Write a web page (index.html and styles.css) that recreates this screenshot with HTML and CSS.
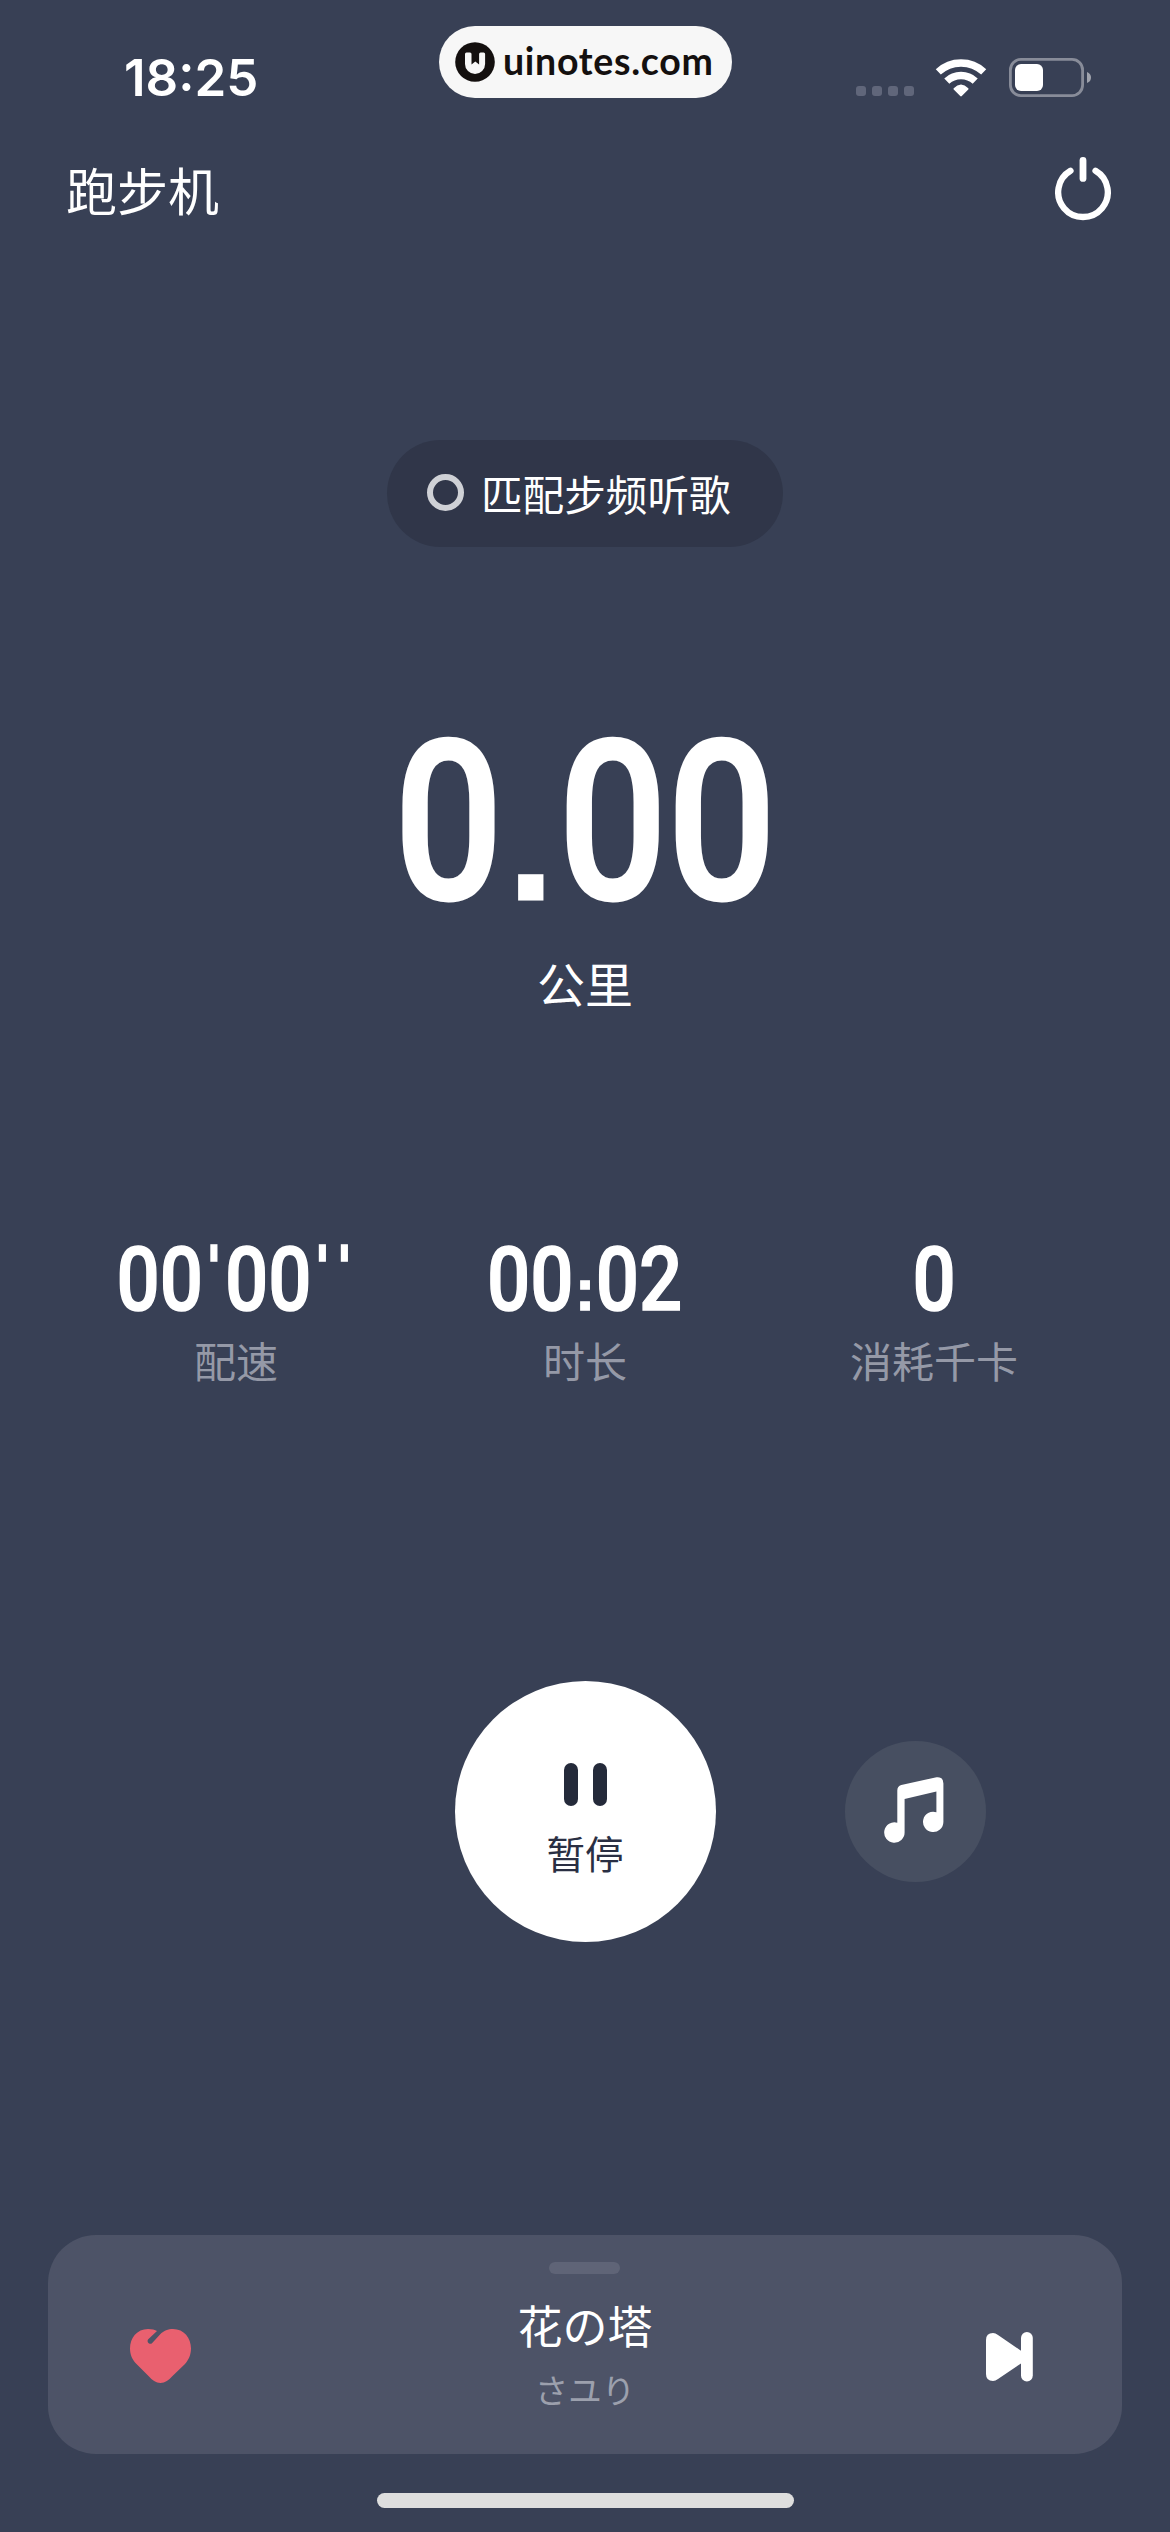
FILE: index.html
```html
<!DOCTYPE html>
<html lang="zh-CN">
<head>
<meta charset="utf-8">
<title>跑步机</title>
<link rel="stylesheet" href="styles.css">
</head>
<body>
<div class="screen">
  <header class="status">
    <span class="clock">18:25</span>
    <div class="island">
      <svg class="island-logo" viewBox="0 0 40 40"><circle cx="20" cy="20" r="19.8" fill="#14100f"/><path d="M10 12q0-1.500 1.500-1.500h3.500q1.500 0 1.500 1.500v10.500l3.800-3 3.800 3v-10.500q0-1.500 1.500-1.500h3q1.500 0 1.500 1.500v10a10 10 0 0 1-20.100 0z" fill="#f7f7f7"/></svg>
      <span class="island-text">uinotes.com</span>
    </div>
    <div class="indicators">
      <span class="signal"><i></i><i></i><i></i><i></i></span>
      <svg class="wifi" viewBox="0 0 52 38">
        <g fill="none" stroke="#fff" stroke-width="7.400"><path d="M3.300 12.900a33.300 33.300 0 0 1 45.400 0"/><path d="M11.800 22.100a20.800 20.800 0 0 1 28.400 0"/></g>
        <path d="M18.700 29.300q7.300-7.400 14.600 0q.5.700 0 1.300l-6.500 6.500q-.8.700-1.600 0l-6.500-6.500q-.5-.6 0-1.300z" fill="#fff"/>
      </svg>
      <svg class="battery" viewBox="0 0 82 39">
        <rect x="1.400" y="1.400" width="72.200" height="36.200" rx="10.500" fill="none" stroke="#888c99" stroke-width="2.800"/>
        <rect x="6" y="6" width="28" height="27" rx="6" fill="#fff"/>
        <path d="M78 14q4 1.500 4 5.500t-4 5.500z" fill="#a0a3ad"/>
      </svg>
    </div>
  </header>

  <div class="topbar">
    <h1 class="title">跑步机</h1>
    <svg class="power" viewBox="0 0 56 65" fill="none" stroke="#fff" stroke-linecap="round"><path d="M15.500 13.800A24.800 24.800 0 1 0 40.500 13.800" stroke-width="6.300"/><path d="M28 3.400v18" stroke-width="6.800"/></svg>
  </div>

  <div class="match"><span class="ring"></span><span>匹配步频听歌</span></div>

  <div class="distance"><span class="digits">0<span class="point">.</span>00</span></div>
  <div class="unit">公里</div>

  <div class="stats">
    <div class="stat"><div class="value"><span class="digits">00<span class="prime">'</span>00<span class="prime">'</span><span class="prime">'</span></span></div><div class="label">配速</div></div>
    <div class="stat"><div class="value"><span class="digits">00<span class="colon">:</span>02</span></div><div class="label">时长</div></div>
    <div class="stat"><div class="value"><span class="digits">0</span></div><div class="label">消耗千卡</div></div>
  </div>

  <div class="controls">
    <div class="pause"><span class="bars"><i></i><i></i></span><span class="pause-text">暂停</span></div>
    <div class="music">
      <svg class="note" viewBox="0 0 60 66" fill="#fff"><path d="M13.300 13.500Q13.300 9.300 17.300 8.100L52.500.2Q59.400-.5 59.400 6.500V45A10.200 10.200 0 1 1 52.400 35.200V14.500L20.600 22V55.300A10.200 10.200 0 1 1 13.300 45.700Z"/></svg>
    </div>
  </div>

  <div class="player">
    <svg class="heart" viewBox="0 0 61 54"><path d="M18 0C22 0 25 .7 27 2L18 10.500C16.500 13 19.500 16 22 14.300L30 5.500C34 1.500 38 0 43 0C54 0 61 9 61 19.500C61 26 58.500 31 55 35L42 47.500C39 51 35 54 30.500 54C26 54 22 51 19 47.500L6.500 35C2.500 31 0 26 0 19.500C0 9 7 0 18 0Z" fill="#e9606f"/></svg>
    <div class="track">
      <span class="handle"></span>
      <span class="song">花の塔</span>
      <span class="artist">さユり</span>
    </div>
    <svg class="next" viewBox="0 0 47 50" fill="#fff"><path d="M0 8Q0 1 7 1Q9.500 1 12 3L35 18.700V31.500L12 47Q9.500 49 7 49Q0 49 0 42Z"/><rect x="35" y="0" width="11.800" height="49.500" rx="5.900"/></svg>
  </div>
  <div class="home"></div>
</div>
</body>
</html>
```

FILE: styles.css
```css
* { box-sizing: border-box; }
body { margin: 0; background: #384055; }
.screen {
  width: 1170px; height: 2532px; overflow: hidden;
  display: flex; flex-direction: column; align-items: center;
  background: #384055; color: #fff;
  font-family: "Noto Sans CJK SC", sans-serif;
  font-weight: 400;
}
.status {
  width: 100%; height: 130px; flex: none;
  display: grid; grid-template-columns: 439px 293px 1fr; align-items: start;
}
.clock {
  padding: 53px 0 0 124px;
  font: 600 51px/50px Inter, sans-serif; letter-spacing: 0;
}
.island {
  margin-top: 26px; height: 72px; border-radius: 36px; padding-left: 16px;
  display: flex; align-items: center; gap: 8px;
  background: #f7f7f7; color: #14100f;
}
.island-logo { width: 40px; height: 40px; flex: none; }
.island-text { margin-top: -2px; font: 700 37.500px/44px Lato, sans-serif; letter-spacing: .7px; white-space: nowrap; }
.indicators { display: flex; padding: 58px 0 0 124px; }
.signal { display: flex; gap: 6px; padding-top: 28px; }
.signal i { width: 10px; height: 10px; border-radius: 3px; background: #60667a; }
.wifi { width: 52px; height: 38px; margin: 1px 0 0 21px; }
.battery { width: 82px; height: 39px; margin-left: 22px; }
.topbar {
  width: 100%; height: 120px; padding: 0 59px 0 66px; flex: none;
  display: flex; justify-content: space-between; align-items: center;
}
.title { margin: -2px 0 0; font-size: 51px; line-height: 60px; font-weight: 400; }
.power { width: 56px; height: 65px; margin-top: -2px; }
.match {
  margin-top: 190px; width: 396px; height: 107px; border-radius: 54px; flex: none;
  padding: 0 0 2px 40px; display: flex; align-items: center; gap: 17px;
  background: #303649; font-size: 41.600px; line-height: 50px;
}
.ring { width: 37px; height: 37px; border: 6px solid #cfd1d6; border-radius: 50%; margin-top: -1px; }
.digits { display: inline-block; transform: scaleX(.86); white-space: nowrap; }
.distance {
  margin-top: 162px; height: 227px; flex: none;
  font: 500 223px/227px Roboto, sans-serif; -webkit-text-stroke: 3px #fff;
}
.point {
  display: inline-block; width: 64px; text-align: center; transform: scaleX(1.18);
  font: 700 155px/1 "Liberation Sans", sans-serif;
}
.unit { margin-top: 18px; font-size: 48px; line-height: 56px; }
.stats {
  margin-top: 225px; width: 1047px; flex: none;
  display: grid; grid-template-columns: repeat(3, 349px);
}
.stat { display: flex; flex-direction: column; align-items: center; }
.value { font: 500 88.500px/90px Roboto, sans-serif; height: 90px; -webkit-text-stroke: 1.500px #fff; }
.prime {
  display: inline-block; width: 25.500px; text-align: center; vertical-align: 22px;
  font: 700 58px/20px "DejaVu Sans", sans-serif;
}
.colon {
  display: inline-block; width: 26px; text-align: center; transform: scaleX(1.18);
  font: 700 58px/1 "Liberation Sans", sans-serif;
}
.label { margin-top: 10px; font-size: 42px; line-height: 50px; color: #9599a7; }
.controls {
  margin-top: 296px; width: 100%; height: 261px; flex: none;
  display: grid; grid-template-columns: 1fr 261px 1fr; align-items: center;
}
.pause {
  grid-column: 2; height: 261px; border-radius: 50%; background: #fff; color: #2a2f43;
  display: flex; flex-direction: column; align-items: center; padding-top: 82px;
}
.bars { display: flex; gap: 15px; }
.bars i { width: 14px; height: 43px; border-radius: 7px; background: #242a3a; }
.pause-text { margin-top: 23px; font-size: 38.500px; line-height: 46px; }
.music {
  width: 141px; height: 141px; margin-left: 129px; border-radius: 50%; background: #474f61;
  display: flex; align-items: center; justify-content: center;
}
.note { width: 60px; height: 66px; margin: -3px 2px 0 0; }
.player {
  margin-top: 293px; width: 1074px; height: 219px; border-radius: 48px; flex: none;
  padding: 0 89px 0 82px; background: #4d5367;
  display: flex; justify-content: space-between; align-items: flex-start;
}
.heart { width: 61px; height: 54px; margin-top: 94px; }
.track { display: flex; flex-direction: column; align-items: center; padding-top: 27px; margin-right: 7px; }
.handle { width: 71px; height: 12px; border-radius: 6px; background: #5f6477; }
.song { margin-top: 24px; font-size: 45px; line-height: 54px; }
.artist { margin-top: 17px; font-size: 33.500px; line-height: 40px; color: #9ca0ad; }
.next { width: 47px; height: 50px; margin-top: 97px; }
.home { margin-top: 39px; width: 417px; height: 15px; border-radius: 8px; background: #dedede; flex: none; }
```
